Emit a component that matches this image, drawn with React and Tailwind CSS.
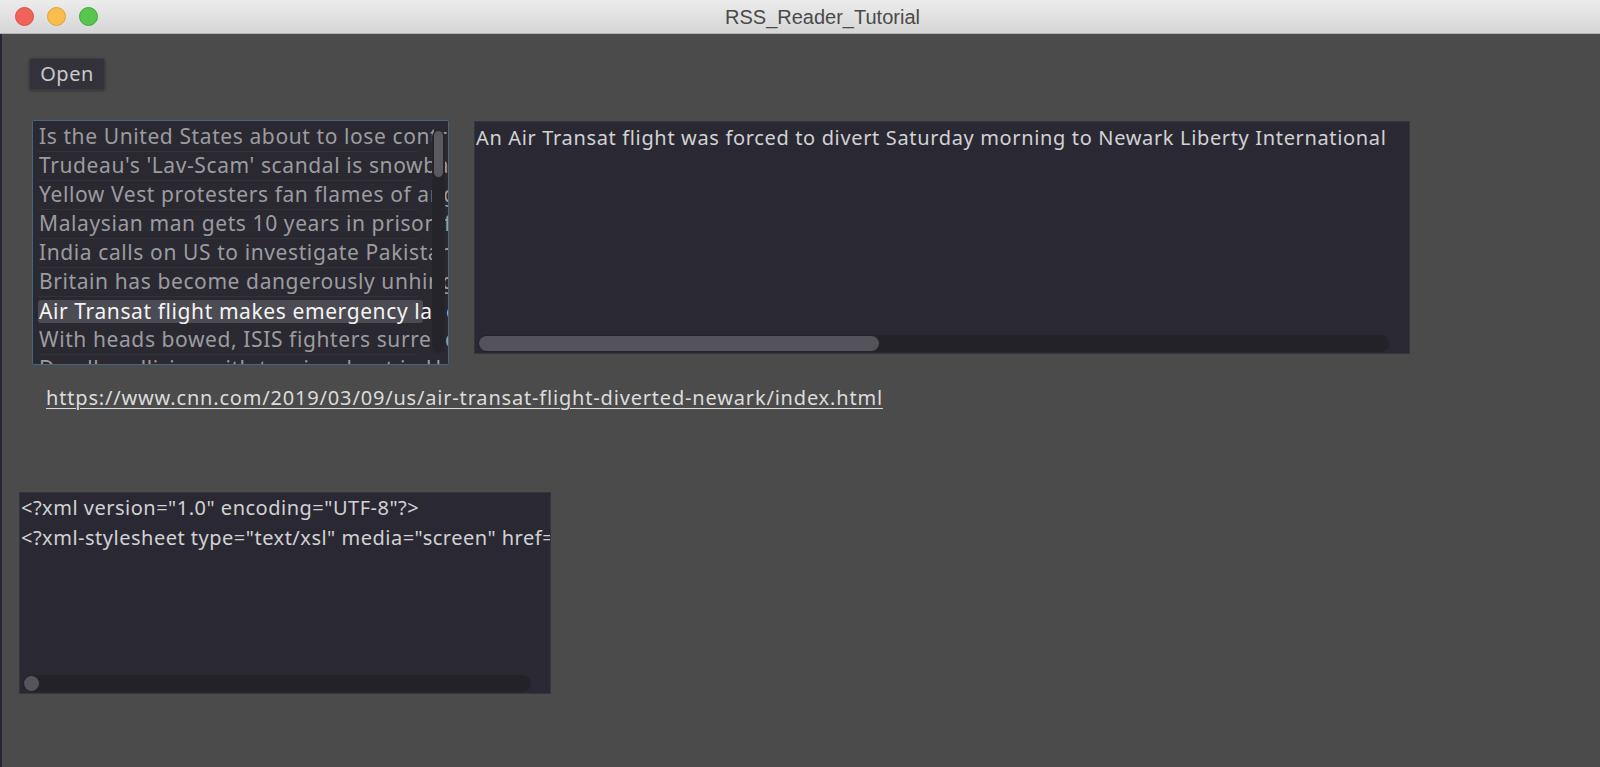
const HEADLINES = [
  "Is the United States about to lose control of the Arctic?",
  "Trudeau's 'Lav-Scam' scandal is snowballing",
  "Yellow Vest protesters fan flames of anger in Paris",
  "Malaysian man gets 10 years in prison for insulting Islam",
  "India calls on US to investigate Pakistan's use of F-16s",
  "Britain has become dangerously unhinged",
  "Air Transat flight makes emergency landing at Newark",
  "With heads bowed, ISIS fighters surrender in Syria",
  "Deadly collision with tourism boat in Hong Kong",
];

const SELECTED = 6;

function TitleBar() {
  return (
    <div className="flex h-[34px] items-center border-b border-[#b4b4b4] bg-gradient-to-b from-[#ececec] to-[#d6d6d6] pl-[15px]">
      <div className="flex gap-[13px]">
        <span className="h-[19px] w-[19px] rounded-full border border-[#df4b44] bg-[#f0625a]" />
        <span className="h-[19px] w-[19px] rounded-full border border-[#dea235] bg-[#f9bd4c]" />
        <span className="h-[19px] w-[19px] rounded-full border border-[#3aa83a] bg-[#58c64d]" />
      </div>
      <div className="flex-1 pr-[53px] text-center font-['Liberation_Sans',sans-serif] text-[20px] text-[#4a4a4a]">
        RSS_Reader_Tutorial
      </div>
    </div>
  );
}

function HeadlineList() {
  return (
    <div className="relative ml-[30px] h-[245px] w-[417px] overflow-hidden rounded-[2px] border border-[#46657f] bg-[#2a2931] pl-[5px] pt-[2px] text-[21px] tracking-[0.6px]">
      {HEADLINES.map((title, i) => (
        <div
          key={title}
          className={
            i === SELECTED
              ? "flex h-[29px] w-[385px] items-center whitespace-nowrap text-[#f4f4f4]"
              : "flex h-[29px] w-[380px] items-center whitespace-nowrap border-b border-[#33323a] text-[#9c9ca0]"
          }
        >
          {i === SELECTED ? (
            <span className="flex h-[23px] w-[385px] items-center rounded-[3px] bg-[#4c4b53] pl-[1px]">{title}</span>
          ) : (
            <span className="pl-[1px]">{title}</span>
          )}
        </div>
      ))}
      <div className="absolute right-[3px] top-[9px] h-[223px] w-[13px] rounded-full bg-[#25242a] px-[2px] py-[1px]">
        <div className="h-[46px] w-[9px] rounded-full bg-[#5a5961]" />
      </div>
    </div>
  );
}

function Scrollbar({ thumb }) {
  return (
    <div className="ml-[3px] mb-[1px] h-[17px] rounded-full bg-[#232228] p-[1px]">
      <div className={thumb} />
    </div>
  );
}

function DescriptionBox() {
  return (
    <div className="ml-[25px] mt-[1px] flex h-[233px] w-[936px] flex-col overflow-hidden border border-[#36353c] bg-[#2a2933]">
      <div className="flex-1 whitespace-nowrap pl-[1px] pt-[1px] leading-[29px] tracking-[0.65px] text-[#d2d2d4]">
        An Air Transat flight was forced to divert Saturday morning to Newark Liberty International
      </div>
      <div className="mr-[20px]">
        <Scrollbar thumb="h-[15px] w-[400px] rounded-full bg-[#54535c]" />
      </div>
    </div>
  );
}

function XmlBox() {
  return (
    <div className="ml-[17px] mt-[81px] flex h-[202px] w-[532px] flex-col overflow-hidden border border-[#36353c] bg-[#2a2933]">
      <div className="flex-1 whitespace-nowrap pl-[1px] leading-[29.5px] tracking-[0.5px] text-[#d2d2d4]">
        <div>{'<?xml version="1.0" encoding="UTF-8"?>'}</div>
        <div>{'<?xml-stylesheet type="text/xsl" media="screen" href="/~d/styles/rss2full.xsl"?>'}</div>
      </div>
      <div className="mr-[19px]">
        <Scrollbar thumb="h-[15px] w-[15px] rounded-full bg-[#55545d]" />
      </div>
    </div>
  );
}

export default function App() {
  return (
    <div className="flex h-[767px] w-[1600px] flex-col overflow-hidden bg-[#4b4b4b] font-['Noto_Sans',sans-serif] text-[20px]">
      <TitleBar />
      <div className="flex flex-1 flex-col border-l-2 border-[#2b2533]">
        <div className="ml-[27px] mt-[24px] flex">
          <button className="h-[32px] w-[76px] rounded-[3px] border border-[#3c3b43] bg-[#33323b] text-[20px] leading-none tracking-[0.5px] text-[#c9c9cc] shadow-[0_1px_3px_rgba(0,0,0,0.35)]">
            Open
          </button>
        </div>
        <div className="mt-[30px] flex items-start">
          <HeadlineList />
          <DescriptionBox />
        </div>
        <div className="ml-[44px] mt-[20px] flex">
          <a className="leading-[26px] tracking-[0.82px] text-[#dcdcdc] underline decoration-1 underline-offset-[3px]">
            https://www.cnn.com/2019/03/09/us/air-transat-flight-diverted-newark/index.html
          </a>
        </div>
        <XmlBox />
      </div>
    </div>
  );
}
